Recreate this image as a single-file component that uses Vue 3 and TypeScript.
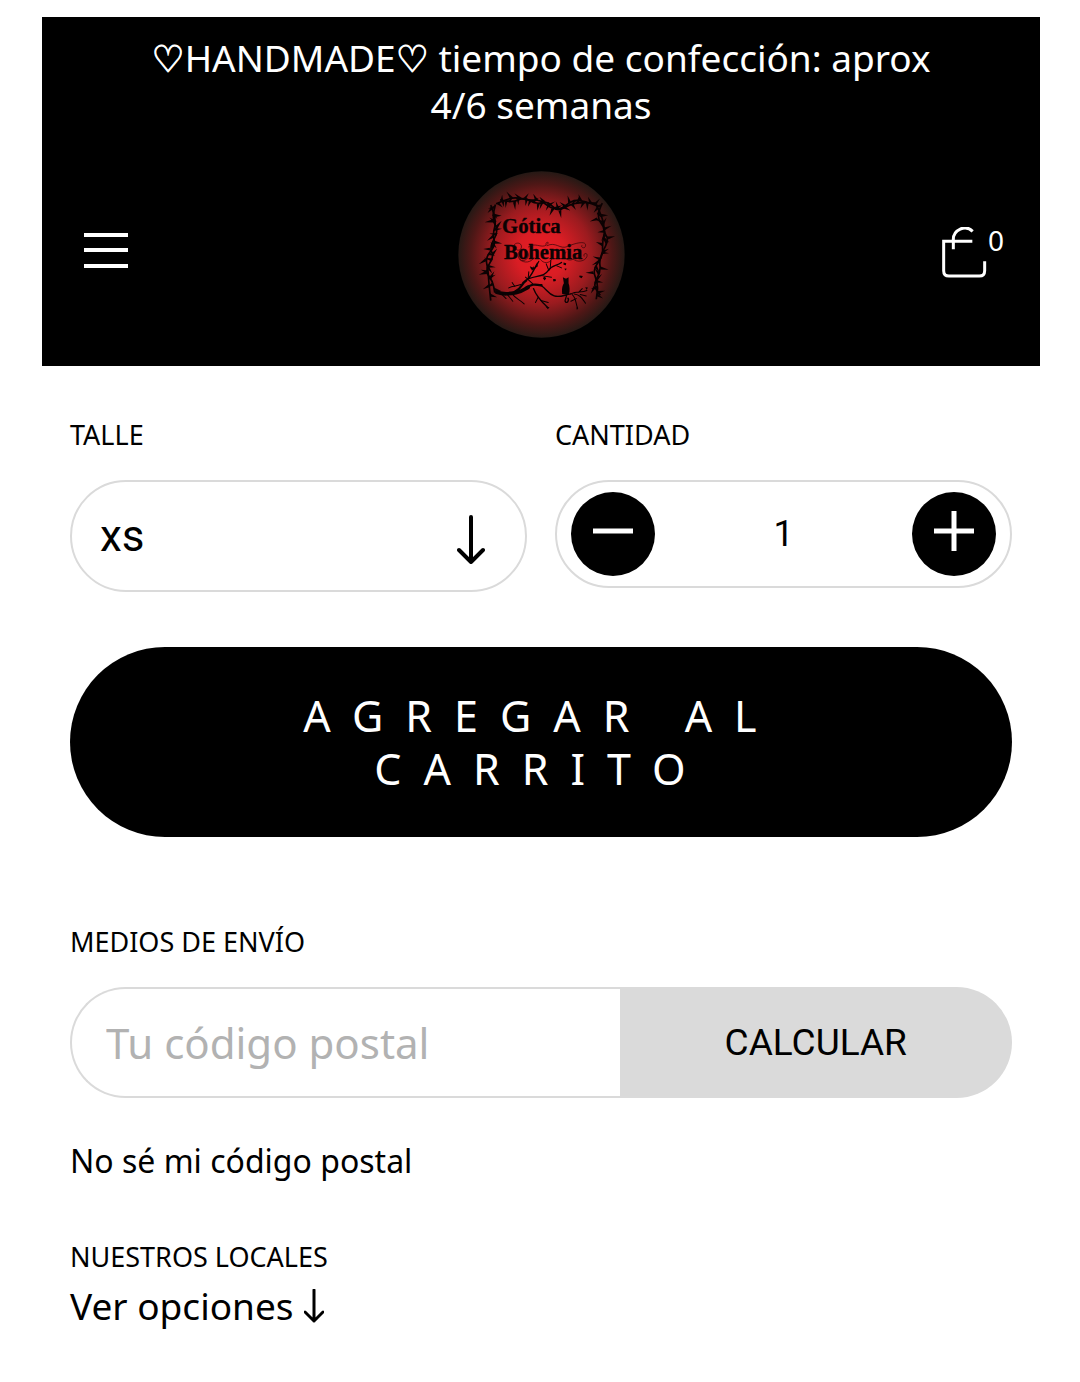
<script setup lang="ts">
import { ref } from 'vue'

type Point = [number, number]

const size = ref('xs')
const quantity = ref(1)
const postalCode = ref('')

const decrease = () => {
  quantity.value = Math.max(1, quantity.value - 1)
}
const increase = () => {
  quantity.value += 1
}

// Thorny frame: each vine is a pair of crossing stems with spikes along them.
const vines: Point[][] = [
  [[166, 132], [190, 122], [222, 112], [262, 122], [298, 120], [330, 146], [362, 148], [396, 120], [430, 124], [474, 140]],
  [[178, 120], [214, 130], [250, 112], [286, 134], [320, 124], [350, 156], [386, 134], [420, 128], [462, 130]],
  [[150, 136], [168, 180], [156, 222], [164, 258], [134, 292], [142, 330], [144, 366], [150, 422]],
  [[164, 134], [152, 176], [174, 214], [146, 262], [160, 292], [132, 332], [156, 364], [162, 398]],
  [[484, 130], [464, 170], [494, 206], [484, 246], [486, 290], [454, 330], [472, 372], [466, 418]],
  [[466, 134], [488, 180], [490, 220], [504, 240], [474, 296], [480, 336], [456, 376], [478, 406]],
]

const stem = (points: Point[]): string => {
  let d = `M${points[0][0]} ${points[0][1]}`
  for (let i = 1; i < points.length - 1; i++) {
    const mx = (points[i][0] + points[i + 1][0]) / 2
    const my = (points[i][1] + points[i + 1][1]) / 2
    d += ` Q${points[i][0]} ${points[i][1]} ${mx} ${my}`
  }
  const last = points[points.length - 1]
  return `${d} L${last[0]} ${last[1]}`
}

const thorns = (points: Point[]): string => {
  let d = ''
  let side = 1
  for (let i = 0; i < points.length - 1; i++) {
    const [x1, y1] = points[i]
    const [x2, y2] = points[i + 1]
    const length = Math.hypot(x2 - x1, y2 - y1)
    const ux = (x2 - x1) / length
    const uy = (y2 - y1) / length
    for (const t of [0.2, 0.7]) {
      const x = x1 + (x2 - x1) * t
      const y = y1 + (y2 - y1) * t
      const reach = 18 + ((i * 5) % 7)
      const lean = i % 2 ? -9 : 9
      const tx = x - uy * side * reach + ux * lean
      const ty = y + ux * side * reach + uy * lean
      d += `M${x - ux * 5} ${y - uy * 5}L${tx} ${ty}L${x + ux * 5} ${y + uy * 5}Z`
      side = -side
    }
  }
  return d
}
</script>

<template>
  <div class="page">
    <header class="header">
      <p class="notice">
        <span class="heart">♡</span>HANDMADE<span class="heart">♡</span> tiempo de confección: aprox 4/6 semanas
      </p>
      <div class="bar">
        <button class="icon-button menu" type="button" aria-label="Menú">
          <svg width="44" height="36" viewBox="0 0 44 36" stroke="#fff" stroke-width="4">
            <path d="M0 2H44M0 17H44M0 33H44" />
          </svg>
        </button>
        <a class="logo" href="#" aria-label="Gótica Bohemia">
          <svg width="167" height="167" viewBox="52 34 500 500">
            <defs>
              <radialGradient id="glow">
                <stop offset="0" stop-color="#ed1c24" />
                <stop offset="0.3" stop-color="#d91d24" />
                <stop offset="0.6" stop-color="#9b1b1f" />
                <stop offset="0.85" stop-color="#4e1716" />
                <stop offset="1" stop-color="#251915" />
              </radialGradient>
            </defs>
            <circle cx="302" cy="284" r="249" fill="url(#glow)" />
            <g fill="none" stroke="#0b0203" stroke-width="5">
              <path v-for="(vine, i) in vines" :key="i" :d="stem(vine)" />
            </g>
            <g fill="#0b0203">
              <path v-for="(vine, i) in vines" :key="i" :d="thorns(vine)" />
            </g>
            <g class="wordmark" fill="#0b0203" stroke="#0b0203" stroke-width="1">
              <text x="184" y="221">Gótica</text>
              <text x="190" y="297">Bohemia</text>
            </g>
            <g fill="none" stroke="#2a0507" stroke-width="2">
              <path d="M216 262c6-18 28-14 26 0s-22 10-14 0M236 298c-14-22 14-40 24-22s-10 34-24 22c14 14 36 10 44-6M262 262c18-16 40 4 54-6s0-12-2-2M298 298c10 14 28 14 36-2M318 258c26-14 40 12 62 2s54-18 54-4-18 6-10 0M396 296c12 14 38 8 42-6s-14-10-8 0M376 276c-16 18 10 34 26 18" />
            </g>
            <g fill="none" stroke="#0b0203" stroke-linecap="round">
              <path stroke-width="11" d="M168 397C190 404 204 402 226 398S250 388 262 382" />
              <path stroke-width="7" d="M222 396C246 384 240 372 256 362M258 384C278 366 290 378 302 376" />
              <path stroke-width="4" d="M256 362C272 350 276 334 290 310M264 356C292 346 310 350 322 332S346 320 362 308M300 376C318 388 322 402 340 408S372 404 390 402M278 386C286 408 300 424 320 442" />
              <path stroke-width="3" d="M240 374C226 380 216 376 204 384M222 380L214 368M214 402C226 418 236 418 250 432M200 404L216 424M184 404L196 416M290 318L274 330M284 324L294 304M324 332L316 312M328 326L330 302M348 318L362 324M306 348L332 352M262 356L264 336M276 372L254 352M292 412L284 428M300 422L322 428M390 402C406 392 422 400 438 392M394 404C406 414 404 430 410 444M400 402C418 404 424 416 434 430M412 398L424 386M406 416L390 424M418 404L436 408" />
            </g>
            <g fill="#0b0203">
              <path d="M364 402C362 382 366 376 369 370L366 352L373 356H377L383 352V370C386 378 388 392 384 404Z" />
              <path d="M267 319l8 4 4-4 0 9-8 1zM306 354l6-4 4 6-5 6zM336 358l8-1 1 6-7 2zM368 308l8 2-1 6-7-1zM416 347l10 1-4 7-7-4zM370 327l7-1-2 6zM314 440l12 2-5 6zM433 382l8 1-4 7zM406 442l6 3-4 5z" />
            </g>
            <path d="M376 404C380 414 368 420 374 426S386 418 380 414" fill="none" stroke="#0b0203" stroke-width="4" />
          </svg>
        </a>
        <a class="cart" href="#" aria-label="Carrito">
          <svg width="45" height="51" viewBox="38 35 135 153" fill="none" stroke="#fff" stroke-width="9">
            <path d="M129 78H43V166Q43 182 59 182H150Q166 182 166 166V138" />
            <path d="M72 102V72C72 44 108 26 130 48" />
          </svg>
          <span class="count">0</span>
        </a>
      </div>
    </header>

    <main class="content">
      <form class="product" @submit.prevent>
        <div class="field">
          <label class="label" for="size">TALLE</label>
          <div class="select-wrap">
            <select id="size" v-model="size" class="select">
              <option value="xs">xs</option>
              <option value="s">s</option>
              <option value="m">m</option>
            </select>
            <svg class="arrow" width="28" height="49" viewBox="0 0 28 49">
              <path d="M14 2V47M2 35L14 47L26 35" />
            </svg>
          </div>
        </div>
        <div class="field">
          <label class="label" for="quantity">CANTIDAD</label>
          <div class="stepper">
            <button class="round" type="button" aria-label="Restar" @click="decrease">
              <svg width="40" height="40" viewBox="0 0 40 40"><path d="M0 20H40" /></svg>
            </button>
            <input id="quantity" v-model="quantity" class="quantity" type="text" inputmode="numeric" />
            <button class="round" type="button" aria-label="Sumar" @click="increase">
              <svg width="40" height="40" viewBox="0 0 40 40"><path d="M0 20H40M20 0V40" /></svg>
            </button>
          </div>
        </div>
        <button class="add" type="submit">AGREGAR AL CARRITO</button>
      </form>

      <form class="shipping" @submit.prevent>
        <label class="label" for="postal">MEDIOS DE ENVÍO</label>
        <div class="postal">
          <input id="postal" v-model="postalCode" class="postal-input" type="text" placeholder="Tu código postal" />
          <button class="calculate" type="submit">CALCULAR</button>
        </div>
        <a class="help" href="#">No sé mi código postal</a>
      </form>

      <section class="stores">
        <h2 class="label">NUESTROS LOCALES</h2>
        <a class="options" href="#">
          Ver opciones
          <svg class="arrow-small" width="20" height="34" viewBox="0 0 20 34">
            <path d="M10 1V32M1 23L10 32L19 23" />
          </svg>
        </a>
      </section>
    </main>
  </div>
</template>

<style>
body {
  margin: 0;
  background: #fff;
}
</style>

<style scoped>
.page {
  box-sizing: border-box;
  padding: 17px 40px 52px 42px;
  color: #000;
  font-family: "Noto Sans", "DejaVu Sans", sans-serif;
}

.page * {
  box-sizing: border-box;
}

a {
  color: inherit;
  text-decoration: none;
}

button {
  padding: 0;
  border: 0;
  cursor: pointer;
}

.header {
  padding: 17px 36px 28px;
  background: #000;
  color: #fff;
}

.notice {
  max-width: 820px;
  margin: 0 auto 43px;
  font-size: 37px;
  line-height: 47px;
  text-align: center;
}

.heart {
  -webkit-text-stroke: 1px #fff;
}

.bar {
  display: grid;
  grid-template-columns: 1fr auto 1fr;
  align-items: center;
}

.icon-button {
  display: flex;
  background: none;
}

.menu {
  justify-self: start;
  margin: 0 0 8px 6px;
}

.logo,
.logo svg {
  display: block;
}

.wordmark {
  font-family: "Liberation Serif", serif;
  font-size: 62px;
  font-weight: 700;
}

.cart {
  display: flex;
  justify-self: end;
  gap: 1px;
  margin-bottom: 4px;
}

.count {
  font-size: 28px;
  line-height: 26px;
}

.content {
  padding: 50px 28px 0;
}

.product {
  display: grid;
  grid-template-columns: repeat(2, minmax(0, 1fr));
  gap: 55px 28px;
}

.label {
  display: block;
  margin: 0;
  font-size: 27px;
  font-weight: 400;
  line-height: 38px;
}

.select-wrap {
  position: relative;
  margin-top: 26px;
}

.select {
  display: block;
  width: 100%;
  height: 112px;
  padding: 0 84px 0 28px;
  border: 2px solid #dadada;
  border-radius: 56px;
  appearance: none;
  background: #fff;
  color: #000;
  font-family: Roboto, sans-serif;
  font-size: 44px;
}

.arrow {
  position: absolute;
  top: 35px;
  right: 42px;
  pointer-events: none;
}

.arrow path,
.arrow-small path {
  fill: none;
  stroke: #000;
  stroke-linecap: round;
  stroke-linejoin: round;
  stroke-width: 4;
}

.arrow-small path {
  stroke-width: 3;
}

.stepper {
  display: flex;
  align-items: center;
  height: 108px;
  margin-top: 26px;
  padding: 0 14px;
  border: 2px solid #dadada;
  border-radius: 54px;
}

.round {
  display: flex;
  flex: none;
  align-items: center;
  justify-content: center;
  width: 84px;
  height: 84px;
  padding-bottom: 6px;
  border-radius: 50%;
  background: #000;
}

.round path {
  fill: none;
  stroke: #fff;
  stroke-width: 5;
}

.quantity {
  flex: 1;
  min-width: 0;
  padding: 0;
  border: 0;
  background: none;
  color: #000;
  font-family: Roboto, sans-serif;
  font-size: 36px;
  text-align: center;
}

.add {
  grid-column: 1 / -1;
  padding: 42px 180px;
  border-radius: 95px;
  background: #000;
  color: #fff;
  font-family: inherit;
  font-size: 43px;
  letter-spacing: 22px;
  line-height: 53px;
}

.shipping {
  margin-top: 86px;
}

.postal {
  display: grid;
  grid-template-columns: minmax(0, 7fr) minmax(0, 5fr);
  height: 111px;
  margin: 26px 0 40px;
}

.postal-input {
  min-width: 0;
  padding: 0 34px;
  border: 2px solid #dadada;
  border-right: 0;
  border-radius: 56px 0 0 56px;
  color: #000;
  font-family: inherit;
  font-size: 42px;
}

.postal-input::placeholder {
  color: #b2b2b2;
  opacity: 1;
}

.calculate {
  border-radius: 0 56px 56px 0;
  background: #dadada;
  color: #000;
  font-family: Roboto, sans-serif;
  font-size: 37px;
}

.help {
  display: block;
  width: fit-content;
  font-size: 32px;
  line-height: 46px;
}

.stores {
  margin-top: 54px;
}

.options {
  display: flex;
  align-items: center;
  gap: 10px;
  width: fit-content;
  margin-top: 6px;
  font-size: 37px;
  line-height: 47px;
}
</style>
